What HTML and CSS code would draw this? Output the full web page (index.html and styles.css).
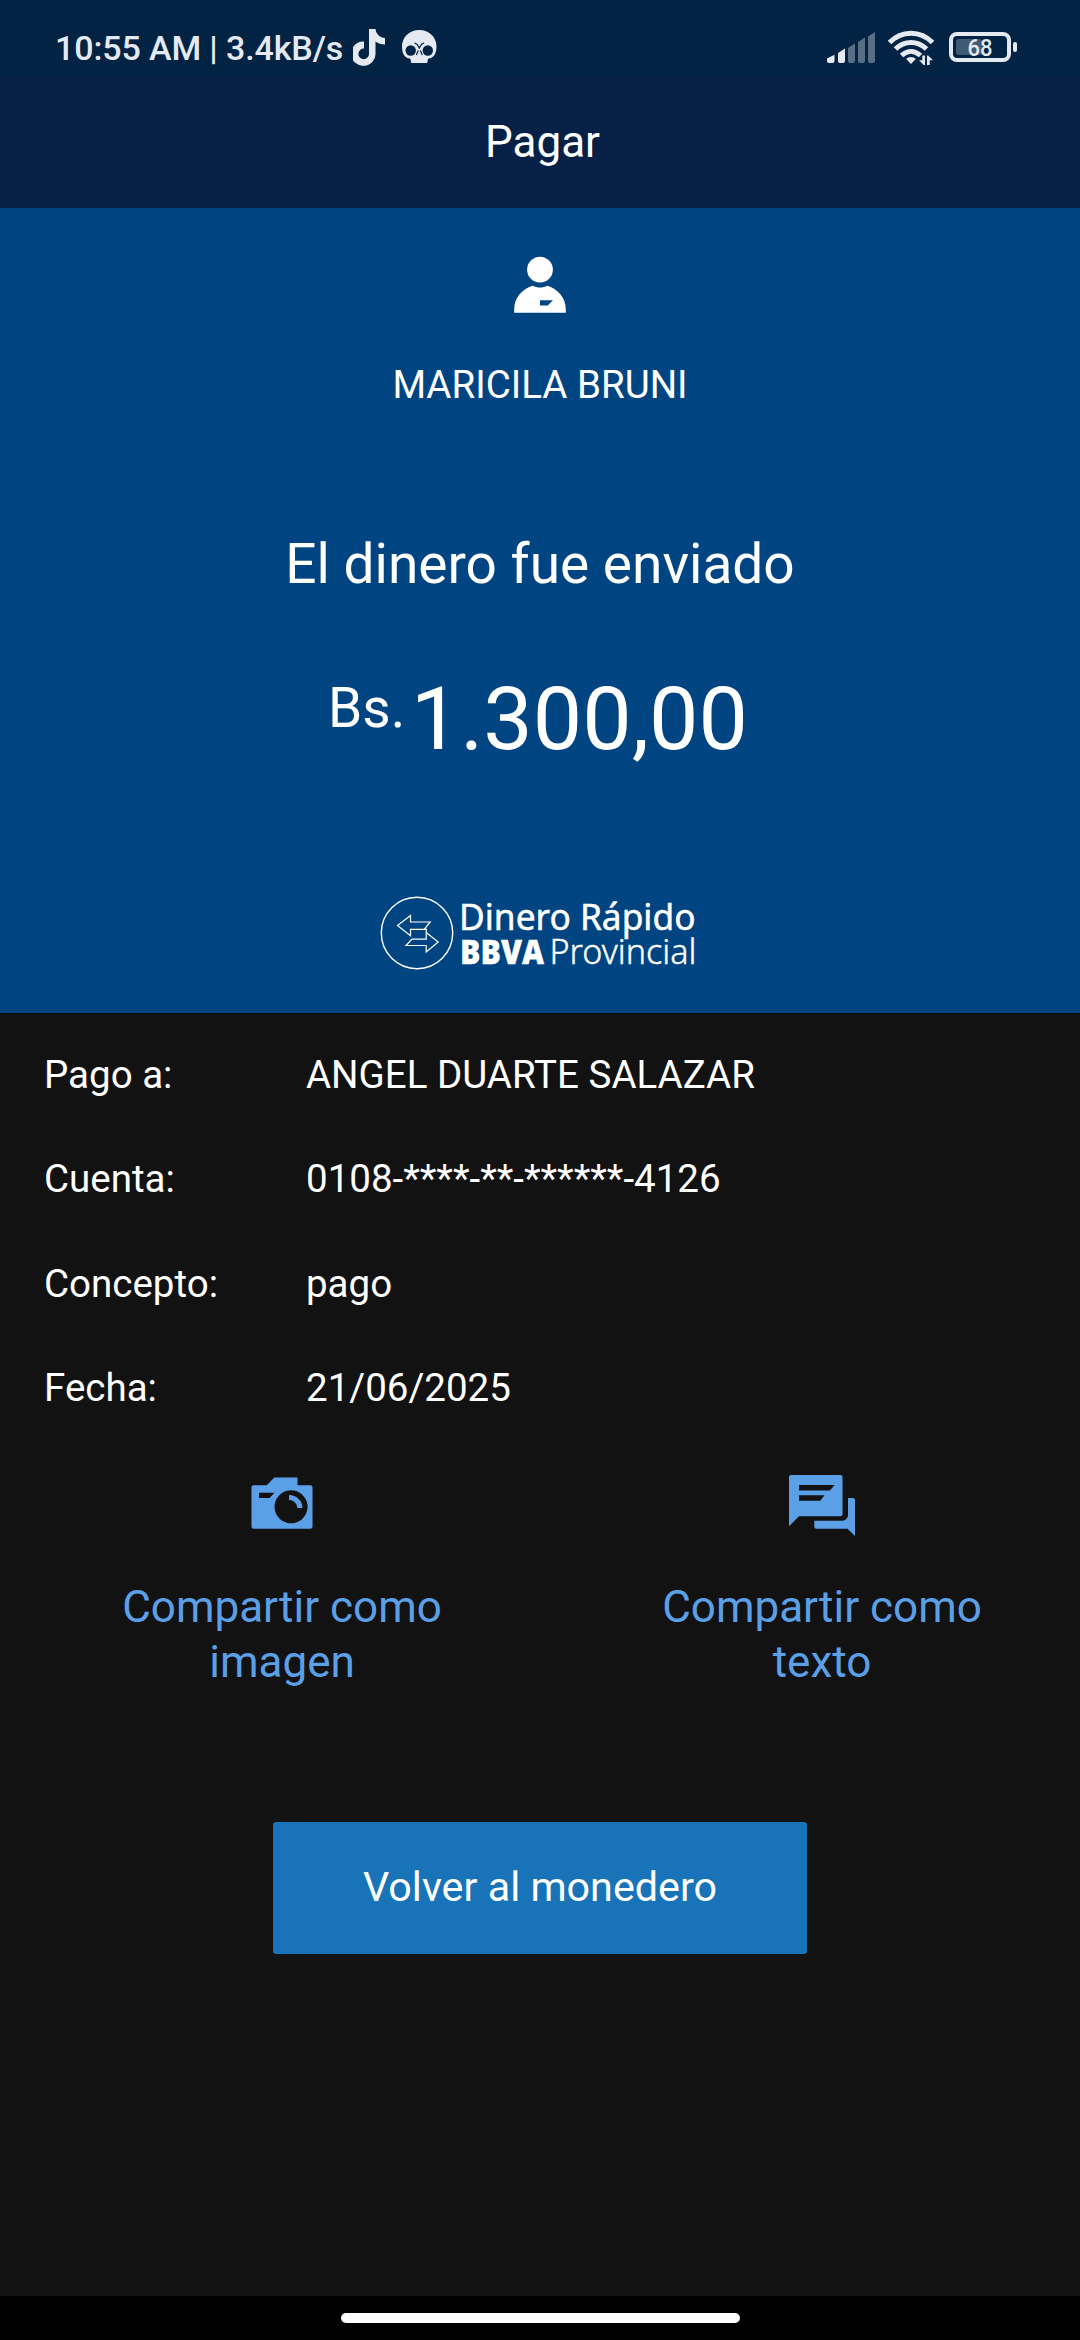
FILE: index.html
```html
<!DOCTYPE html>
<html lang="es">
<head>
<meta charset="utf-8">
<title>Pagar</title>
<link rel="stylesheet" href="styles.css">
</head>
<body>
<div class="screen">
  <div class="status">
    <span class="status-text">10:55 AM | 3.4kB/s</span>
    <svg class="ico-tiktok" viewBox="353 28 34 38"><path fill="currentColor" d="M369 29h6.500c.5 4.600 3.800 8.500 9.500 9v6.500c-3.800 0-7-1-9.500-3V52.500a12.200 12.200 0 1 1-12.500-11l1 .2v6.900a5.300 5.300 0 1 0 5 5.200z"/></svg>
    <svg class="ico-skull" viewBox="401 28 38 38">
      <path fill="currentColor" d="M419.300 30c9.700 0 17.200 7 17.200 16.500 0 5.500-1.800 10-5.500 11.500l-3 .8-.8 4.200h-16l-.8-4.200-3-.8c-3.700-1.500-5.400-6-5.400-11.500C402 37 409.600 30 419.300 30z"/>
      <g class="skull-cut"><circle cx="410.700" cy="50.500" r="5.200"/><circle cx="427.800" cy="50.500" r="5.200"/></g>
      <path class="skull-line" d="M414.500 43l2.500 1.300 2.300 3.700 2.300-3.700 2.500-1.300M418.300 50.500l-2 4.500M420.300 50.500l2 4.500"/>
    </svg>
    <svg class="ico-system" viewBox="820 24 200 48">
      <g fill="currentColor">
        <path d="M827 58.500l7.500-3.700V61a2 2 0 0 1-2 2H829a2 2 0 0 1-2-2zM838 53l7-4.500V61a2 2 0 0 1-2 2h-3a2 2 0 0 1-2-2z"/>
        <path opacity=".38" d="M848 48l7-4.500V61a2 2 0 0 1-2 2h-3a2 2 0 0 1-2-2zM858 42l7-4.500V61a2 2 0 0 1-2 2h-3a2 2 0 0 1-2-2zM868 36.500l7-4.500V61a2 2 0 0 1-2 2h-3a2 2 0 0 1-2-2z"/>
        <path d="M911 64l-4.800-5c2-2.800 7.600-2.800 9.600 0z"/>
        <path d="M922.300 55.500h2.700V65h-1.300l-4.700-4.800h3.300zM927 65h2.700v-4.700h3.300L928.200 55.500H927z"/>
        <rect x="1013" y="42" width="4" height="10" rx="2"/>
        <rect x="956" y="39" width="26" height="16" rx="3" opacity=".28"/>
      </g>
      <g fill="none" stroke="currentColor">
        <path stroke-width="5" d="M889.500 42.500c12-12.500 31-12.500 43 0M895.500 49c9-8.700 22-8.700 31 0M901.500 55.500c6-5.500 13-5.500 19 0"/>
        <rect x="951" y="34" width="58" height="26" rx="6" stroke-width="4"/>
      </g>
      <text class="battery-text" x="967.500" y="56" textLength="25" lengthAdjust="spacingAndGlyphs">68</text>
    </svg>
  </div>
  <header class="header">Pagar</header>
  <section class="hero">
    <svg class="ico-person" viewBox="514 256 52 58"><circle cx="540" cy="269.700" r="12.900" fill="#fff"/><path fill="#fff" fill-rule="evenodd" d="M532.500 285.700c4.800 2.400 10.200 2.400 15 0 10.500 3.300 18.300 12.200 18.300 23.500v3.600h-51.600v-3.600c0-11.300 7.800-20.200 18.300-23.500zM540 300.200v5.400h7.700l5.300-5.400z"/></svg>
    <div class="person">MARICILA BRUNI</div>
    <h1 class="sent">El dinero fue enviado</h1>
    <div class="amount"><span class="currency">Bs.</span><span class="value">1.300,00</span></div>
    <svg class="brand" viewBox="380 884 320 98">
      <g fill="none" stroke="#fff">
        <circle cx="417" cy="933" r="35.700" stroke-width="1.400"/>
        <path stroke-width="1.200" d="M397.500 925.500l13-10v6.500h19.700l-6 7.300h-13.700v6.500zM406 945.500l6-6.300h14.200v-6.700l12 9.500-12 10v-6.500zM410.500 929.300h15.800v3.500"/>
      </g>
      <text class="brand-name" x="459" y="930.300" textLength="236.500" lengthAdjust="spacingAndGlyphs">Dinero Rápido</text>
      <text class="brand-bank" x="460" y="963.500" textLength="84" lengthAdjust="spacingAndGlyphs">BBVA</text>
      <text class="brand-prov" x="549.500" y="963.500" textLength="147" lengthAdjust="spacingAndGlyphs">Provincial</text>
    </svg>
  </section>
  <dl class="details">
    <dt>Pago a:</dt><dd>ANGEL DUARTE SALAZAR</dd>
    <dt>Cuenta:</dt><dd>0108-****-**-******-4126</dd>
    <dt>Concepto:</dt><dd>pago</dd>
    <dt>Fecha:</dt><dd>21/06/2025</dd>
  </dl>
  <div class="share">
    <a class="share-item">
      <svg viewBox="247 1470 70 70"><path fill="currentColor" fill-rule="evenodd" d="M274.300 1477.500h23.200v7.700h13a2 2 0 0 1 2 2v39.500a2 2 0 0 1-2 2h-57a2 2 0 0 1-2-2v-39.500a2 2 0 0 1 2-2h13.200zM259 1492.700v5.300h10.500l5-5.300zM291 1490.300a16.500 16.500 0 1 0 .1 0z"/><path fill="currentColor" d="M289 1495a13.300 13.300 0 0 1 13.500 13h-5.200a8.200 8.200 0 0 0-8.300-7.900z"/></svg>
      <span>Compartir como imagen</span>
    </a>
    <a class="share-item">
      <svg viewBox="787 1470 70 70"><path fill="currentColor" fill-rule="evenodd" d="M791 1475h49.500a2 2 0 0 1 2 2v37.300a2 2 0 0 1-2 2H799l-10 10V1477a2 2 0 0 1 2-2zM799 1485v5.500h30.800l4.900-5.500zM799 1495.300v5.500h21.300l4.200-5.500z"/><path fill="currentColor" d="M848 1498h5a2 2 0 0 1 2 2v36l-7.500-7.300h-31.200a2 2 0 0 1-2-2v-6H842a5.500 5.500 0 0 0 6-5.500z"/></svg>
      <span>Compartir como texto</span>
    </a>
  </div>
  <button class="back">Volver al monedero</button>
  <div class="nav"><span class="pill"></span></div>
</div>
</body>
</html>
```
FILE: styles.css
```css
* { box-sizing: border-box; margin: 0; padding: 0; }
body { font-family: Roboto, sans-serif; background: #121212; color: #fff; }
svg { display: block; flex: none; }
.screen { width: 1080px; height: 2340px; display: flex; flex-direction: column; overflow: hidden; }
.status { height: 77px; flex: none; display: flex; align-items: flex-start; padding: 24px 60px 0 55px; background: #022343; color: #e5e9f1; }
.status-text { width: 297px; white-space: nowrap; font-size: 34px; font-weight: 500; letter-spacing: -0.12px; line-height: 48px; }
.ico-tiktok { width: 34px; height: 38px; margin: 4px 14px 0 1px; }
.ico-skull { width: 38px; height: 38px; margin-top: 4px; }
.skull-cut { fill: #022343; }
.skull-line { fill: none; stroke: #022343; stroke-width: 1.2px; }
.ico-system { width: 200px; height: 48px; margin-left: auto; }
.battery-text { font-size: 23px; font-weight: 500; fill: currentColor; }
.header { height: 131px; flex: none; background: #072146; text-align: center; font-size: 44px; line-height: 60px; padding: 35px 0 0 5px; }
.hero { height: 805px; flex: none; background: #004481; display: flex; flex-direction: column; align-items: center; padding-top: 48px; }
.ico-person { width: 52px; height: 58px; }
.person { font-size: 38.5px; line-height: 46px; margin-top: 48px; }
.sent { font-size: 55px; font-weight: 400; line-height: 64px; margin-top: 124px; }
.amount { display: flex; align-items: flex-start; margin: 71px 4px 0 0; height: 104px; }
.currency { font-size: 55px; line-height: 64px; margin-right: 5.5px; margin-top: 9px; }
.value { font-size: 88px; line-height: 104px; }
.brand { width: 320px; height: 98px; margin-top: 113px; overflow: visible; }
.brand text { fill: #fff; stroke: #fff; font-family: "Noto Sans", sans-serif; }
.brand .brand-name { font-size: 36px; font-weight: 400; stroke-width: 0.5px; }
.brand .brand-bank { font-family: "Open Sans", sans-serif; font-size: 34px; font-weight: 800; stroke-width: 0.3px; }
.brand .brand-prov { font-size: 34px; font-weight: 300; stroke-width: 0.4px; }
.details { display: grid; grid-template-columns: 262px 1fr; grid-auto-rows: 104.300px; padding: 22px 44px 0; height: 457px; flex: none; font-size: 38.5px; line-height: 80px; }
.share { height: 352px; flex: none; display: grid; grid-template-columns: 540px 540px; color: #5b9fe6; }
.share-item { display: flex; flex-direction: column; align-items: center; gap: 40px; padding-left: 24px; text-align: center; font-size: 44px; line-height: 55px; }
.share-item svg { width: 70px; height: 70px; }
.share-item span { width: 340px; }
.back { width: 534px; height: 132px; flex: none; align-self: center; border: 0; border-radius: 3px; padding-bottom: 3px; background: #1973b8; color: #fff; font: 400 41.25px/126px Roboto, sans-serif; }
.nav { height: 44px; flex: none; margin-top: auto; background: #000; display: flex; justify-content: center; padding-top: 17px; }
.pill { width: 399px; height: 10px; border-radius: 5px; background: #fff; }
```
